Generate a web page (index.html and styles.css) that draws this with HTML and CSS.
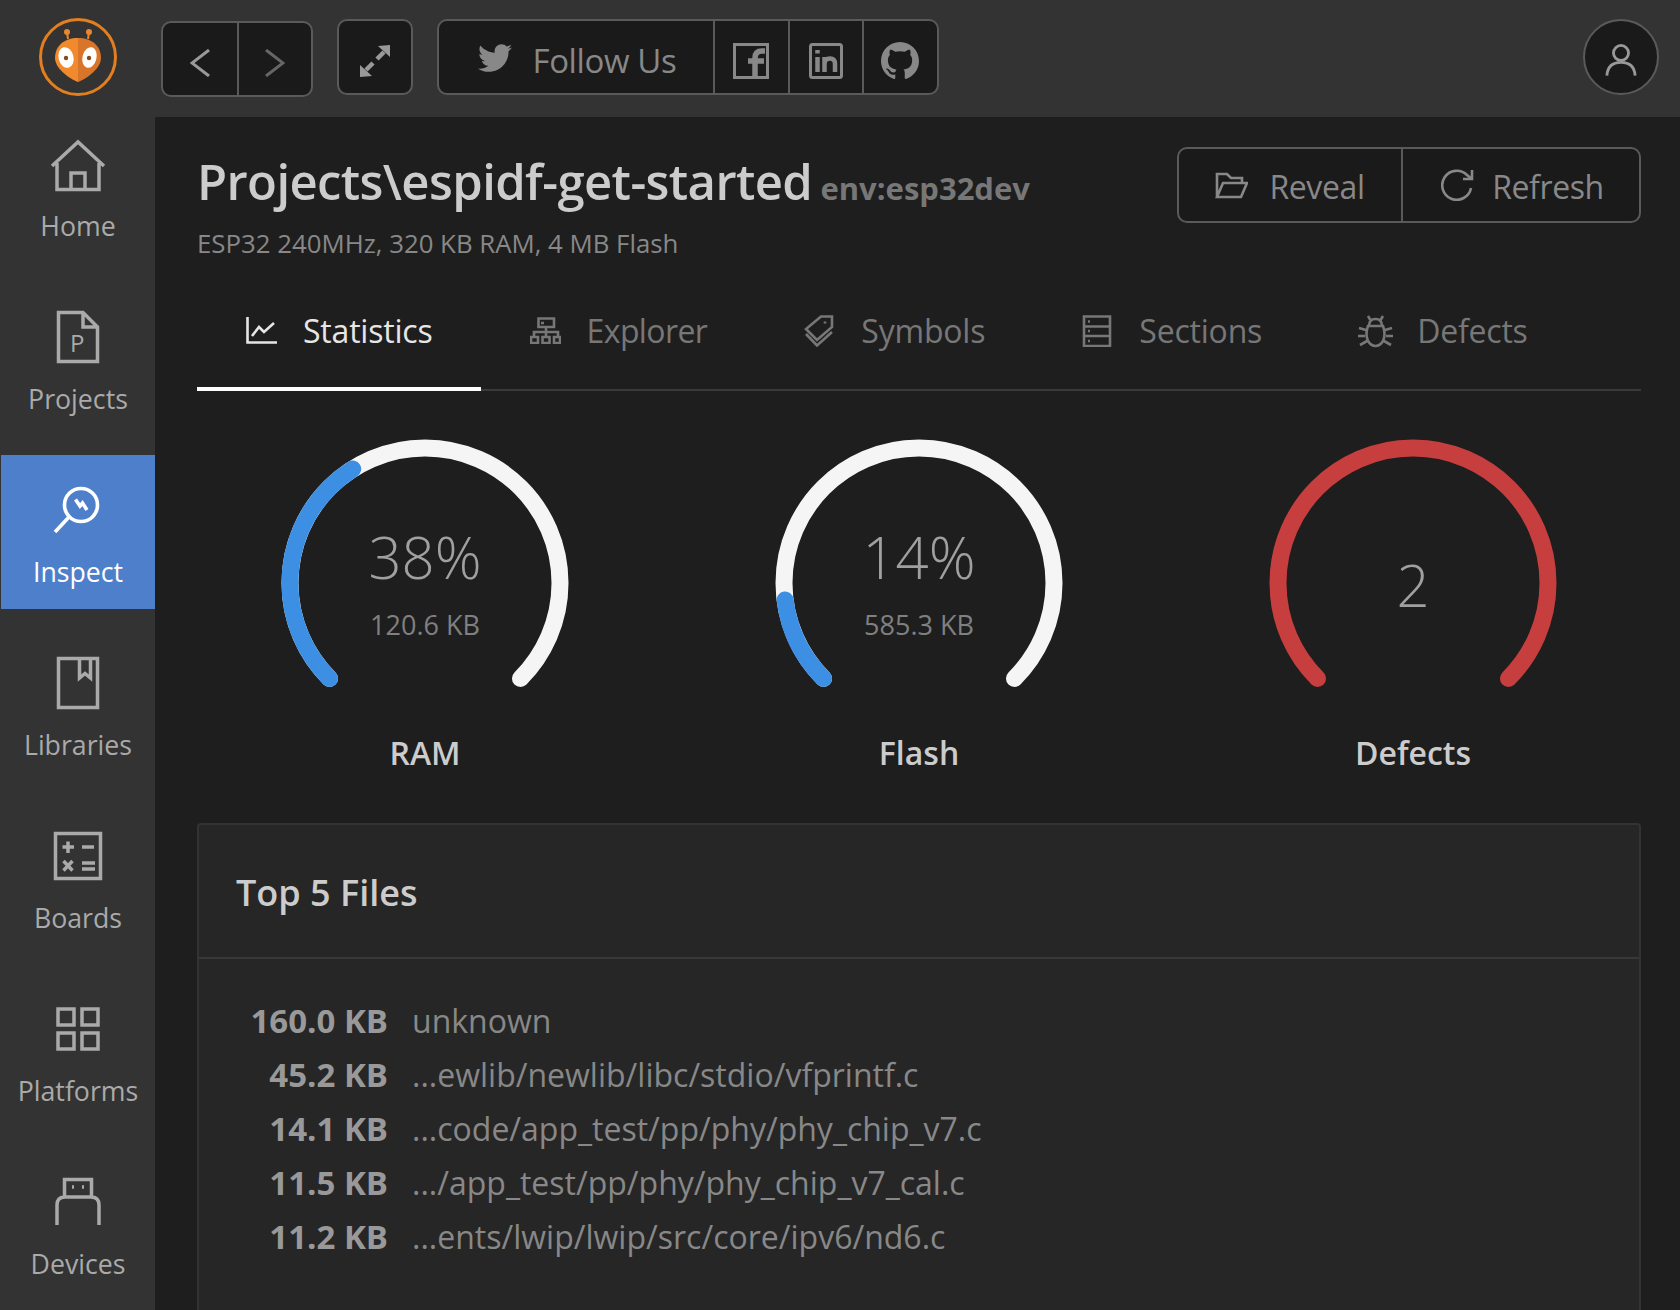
FILE: index.html
```html
<!DOCTYPE html>
<html lang="en">
<head>
<meta charset="utf-8">
<title>PlatformIO Inspect</title>
<link rel="stylesheet" href="styles.css">
</head>
<body>
<div class="app">
  <aside class="sidebar">
    <div class="logo-wrap">
      <svg class="logo" width="78" height="78" viewBox="0 0 78 78">
        <circle cx="39" cy="39" r="37.5" fill="none" stroke="#e37f1f" stroke-width="3"/>
        <path d="M29 21 L28 14 M49 21 L50 14" stroke="#e8872c" stroke-width="2" fill="none"/>
        <circle cx="28" cy="14" r="3" fill="#e8872c"/><circle cx="50" cy="14" r="3" fill="#e8872c"/>
        <path d="M39 20 C25 20 16 28 16 40 C16 50 29 60 39 64 Z" fill="#f08a2c"/>
        <path d="M39 20 C53 20 62 28 62 40 C62 50 49 60 39 64 Z" fill="#d8752a"/>
        <ellipse cx="27" cy="39.5" rx="7.5" ry="10.5" fill="#fff" transform="rotate(-14 27 39.5)"/>
        <ellipse cx="50.5" cy="39.5" rx="7" ry="10.5" fill="#fff" transform="rotate(14 50.5 39.5)"/>
        <circle cx="27" cy="40" r="2.2" fill="#8a4a18"/><circle cx="50" cy="40" r="2.2" fill="#8a4a18"/>
      </svg>
    </div>
    <nav class="nav">
      <a class="nav-item">
        <svg class="nav-icon" width="56" height="56" viewBox="0 0 56 56"><path d="M2 30 L28 6 L54 30 M7 27 V53.5 H49 V27 M21 53.5 V37 H35 V53.5"/></svg>
        <span class="nav-label">Home</span>
      </a>
      <a class="nav-item">
        <svg class="nav-icon" width="56" height="56" viewBox="0 0 56 56"><path d="M8.5 3.5 H33 L47.5 18 V52.5 H8.5 Z M33 3.5 V18 H47.5"/><text class="icon-letter" x="20" y="43">P</text></svg>
        <span class="nav-label">Projects</span>
      </a>
      <a class="nav-item active">
        <svg class="nav-icon" width="56" height="56" viewBox="0 0 56 56"><circle cx="31" cy="23" r="16.5"/><path d="M19 35 L5 50 M25.5 17.5 L30 24 L32.5 21 L37 28"/></svg>
        <span class="nav-label">Inspect</span>
      </a>
      <a class="nav-item">
        <svg class="nav-icon" width="56" height="56" viewBox="0 0 56 56"><path d="M8.5 3.5 H47.5 V52.5 H8.5 Z M29.5 3.5 V23 L35 18.5 L40.5 23 V3.5"/></svg>
        <span class="nav-label">Libraries</span>
      </a>
      <a class="nav-item">
        <svg class="nav-icon" width="56" height="56" viewBox="0 0 56 56"><path d="M5.5 5.5 H50.5 V50.5 H5.5 Z M12.5 19 H24 M18 13.5 V25 M32 19 H44 M13.5 33 L22.5 42.5 M22.5 33 L13.5 42.5 M32 35 H45 M32 41 H45"/></svg>
        <span class="nav-label">Boards</span>
      </a>
      <a class="nav-item">
        <svg class="nav-icon" width="56" height="56" viewBox="0 0 56 56"><path d="M8 8 H24 V24 H8 Z M32 8 H48 V24 H32 Z M8 32 H24 V48 H8 Z M32 32 H48 V48 H32 Z"/></svg>
        <span class="nav-label">Platforms</span>
      </a>
      <a class="nav-item">
        <svg class="nav-icon" width="56" height="56" viewBox="0 0 56 56"><path d="M14.5 23 V5.5 H41.5 V23 M7 51 V31 Q7 23 15 23 H41 Q49 23 49 31 V51 M22 13 H24 M32 13 H34"/></svg>
        <span class="nav-label">Devices</span>
      </a>
    </nav>
  </aside>
  <div class="content">
    <header class="topbar">
      <div class="btn-group offset">
        <span class="btn square">
          <svg class="ico chevron" width="20" height="28" viewBox="0 0 20 28"><path d="M19 1 L2 14 L19 27"/></svg>
        </span>
        <span class="btn square dim">
          <svg class="ico chevron" width="20" height="28" viewBox="0 0 20 28"><path d="M1 1 L18 14 L1 27"/></svg>
        </span>
      </div>
      <div class="btn-group expand">
        <span class="btn single">
          <svg class="ico-fill" width="30" height="32" viewBox="0 0 30 32"><path d="M30 0 V12 L18 1 Z M0 32 V20 L12 31 Z"/><path class="expand-shaft" d="M17 14 L24 7 M13 18 L6 25"/></svg>
        </span>
      </div>
      <div class="btn-group">
        <span class="btn follow">
          <svg class="ico-fill" width="34" height="30" viewBox="0 30 512 450"><path d="M459.37 151.716c.325 4.548.325 9.097.325 13.645 0 138.72-105.583 298.558-298.558 298.558-59.452 0-114.68-17.219-161.137-47.106 8.447.974 16.568 1.299 25.34 1.299 49.055 0 94.213-16.568 130.274-44.832-46.132-.975-84.792-31.188-98.112-72.772 6.498.974 12.995 1.624 19.818 1.624 9.421 0 18.843-1.3 27.614-3.573-48.081-9.747-84.143-51.98-84.143-102.985v-1.299c13.969 7.797 30.214 12.67 47.431 13.319-28.264-18.843-46.781-51.005-46.781-87.391 0-19.492 5.197-37.36 14.294-52.954 51.655 63.675 129.3 105.258 216.365 109.807-1.624-7.797-2.599-15.918-2.599-24.04 0-57.828 46.782-104.934 104.934-104.934 30.213 0 57.502 12.67 76.67 33.137 23.715-4.548 46.456-13.32 66.599-25.34-7.798 24.366-24.366 44.833-46.132 57.827 21.117-2.273 41.584-8.122 60.426-16.243-14.292 20.791-32.161 39.308-52.628 54.253z"/></svg>
          <span class="btn-text">Follow Us</span>
        </span>
        <span class="btn social">
          <svg class="ico" width="36" height="36" viewBox="0 0 36 36"><path d="M1.5 1.5 H34.5 V34.5 H1.5 Z" stroke-width="3"/><path d="M22 34 V15 Q22 8 29 8 H32 M15 18 H31" stroke-width="5.5"/></svg>
        </span>
        <span class="btn social">
          <svg class="ico" width="34" height="36" viewBox="0 0 34 36"><rect x="1.5" y="1.5" width="31" height="33" rx="2" stroke-width="3"/><path d="M8.5 14 V29 M8.5 7 V10.5 M15.5 14 V29 M15.5 21 Q15.5 15.5 21 15.5 Q26 15.5 26 21 V29" stroke-width="4.5"/></svg>
        </span>
        <span class="btn social">
          <svg class="ico-fill" width="38" height="40" viewBox="0 0 16 16"><path d="M8 0C3.58 0 0 3.58 0 8c0 3.54 2.29 6.53 5.47 7.59.4.07.55-.17.55-.38 0-.19-.01-.82-.01-1.49-2.01.37-2.53-.49-2.69-.94-.09-.23-.48-.94-.82-1.13-.28-.15-.68-.52-.01-.53.63-.01 1.08.58 1.23.82.72 1.21 1.87.87 2.33.66.07-.52.28-.87.51-1.07-1.78-.2-3.64-.89-3.64-3.95 0-.87.31-1.59.82-2.15-.08-.2-.36-1.02.08-2.12 0 0 .67-.21 2.2.82.64-.18 1.32-.27 2-.27.68 0 1.36.09 2 .27 1.53-1.04 2.2-.82 2.2-.82.44 1.1.16 1.92.08 2.12.51.56.82 1.27.82 2.15 0 3.07-1.87 3.75-3.65 3.95.29.25.54.73.54 1.48 0 1.07-.01 1.93-.01 2.2 0 .21.15.46.55.38A8.013 8.013 0 0016 8c0-4.42-3.58-8-8-8z"/></svg>
        </span>
      </div>
      <span class="avatar">
        <svg class="ico" width="32" height="35" viewBox="0 0 34 36"><circle cx="17" cy="10" r="8"/><path d="M2 34 Q3 20 17 20 Q31 20 32 34"/></svg>
      </span>
    </header>
    <main class="main">
      <section class="page-head">
        <div>
          <h1 class="title">Projects\espidf-get-started <small class="env">env:esp32dev</small></h1>
          <p class="subtitle">ESP32 240MHz, 320 KB RAM, 4 MB Flash</p>
        </div>
        <div class="btn-group actions">
          <span class="btn action reveal">
            <svg class="ico thin" width="33" height="27" viewBox="0 0 33 27"><path d="M2 25 V2 H12 L16 6 H27 V11 M2 25 L8 11 H32 L26 25 Z"/></svg>
            <span class="btn-text">Reveal</span>
          </span>
          <span class="btn action">
            <svg class="ico thin refresh" width="33" height="32" viewBox="0 0 33 32"><path d="M30 19 A14.5 14.5 0 1 1 26 6 L31 10"/><path d="M31 1 V10 H22" /></svg>
            <span class="btn-text">Refresh</span>
          </span>
        </div>
      </section>
      <nav class="tabs">
        <a class="tab active">
          <svg class="tab-icon" width="31" height="27" viewBox="0 0 31 27"><path d="M1.5 0 V25.5 H31 M6 19 L13 10 L18 15 L28 6"/></svg>
          <span>Statistics</span>
        </a>
        <a class="tab tab-tight">
          <svg class="tab-icon" width="31" height="27" viewBox="0 0 31 27"><path d="M8.5 1.5 H24 V10 H8.5 Z M11 6 H14 M16 10 V15 M4 20 V15 H28 V20 M16 15 V20 M1 20 H8 V26 H1 Z M12.5 20 H19.5 V26 H12.5 Z M24 20 H30 V26 H24 Z"/></svg>
          <span>Explorer</span>
        </a>
        <a class="tab">
          <svg class="tab-icon" width="31" height="32" viewBox="0 0 31 32"><path d="M17 1.5 H28 V12 L13 25 L2 14 Z M2 19 L13 30.5 L28 17 M21 6.5 V8.5"/></svg>
          <span>Symbols</span>
        </a>
        <a class="tab">
          <svg class="tab-icon" width="31" height="32" viewBox="0 0 31 32"><path d="M2 1.5 H28 V31 H2 Z M2 11.5 H28 M2 21 H28 M6 6.5 H8 M6 16 H8 M6 26 H8"/></svg>
          <span>Sections</span>
        </a>
        <a class="tab tab-last">
          <svg class="tab-icon" width="35" height="34" viewBox="0 0 35 34"><path d="M10 12 H25 Q28 20 25 27 Q22 32 17.5 32 Q13 32 10 27 Q7 20 10 12 Z M11 12 Q11 5 17.5 5 Q24 5 24 12 M10 2 L13 7 M25 2 L22 7 M1 14 L8 16 M34 14 L27 16 M0 22 H7 M35 22 H28 M2 31 L9 27 M33 31 L26 27"/></svg>
          <span>Defects</span>
        </a>
      </nav>
      <section class="gauges">
        <figure class="gauge">
          <div class="dial">
            <svg class="arc" width="300" height="260" viewBox="0 0 300 260">
              <path class="track" d="M54.54 245.46 A135 135 0 1 1 245.46 245.46"/>
              <path class="used" d="M54.54 245.46 A135 135 0 0 1 77.67 35.97"/>
            </svg>
            <div class="readout">
              <div class="value">38%</div>
              <div class="amount">120.6 KB</div>
            </div>
          </div>
          <figcaption class="caption">RAM</figcaption>
        </figure>
        <figure class="gauge">
          <div class="dial">
            <svg class="arc" width="300" height="260" viewBox="0 0 300 260">
              <path class="track" d="M54.54 245.46 A135 135 0 1 1 245.46 245.46"/>
              <path class="used" d="M54.54 245.46 A135 135 0 0 1 16.07 166.9"/>
            </svg>
            <div class="readout">
              <div class="value">14%</div>
              <div class="amount">585.3 KB</div>
            </div>
          </div>
          <figcaption class="caption">Flash</figcaption>
        </figure>
        <figure class="gauge">
          <div class="dial">
            <svg class="arc" width="300" height="260" viewBox="0 0 300 260">
              <path class="track danger" d="M54.54 245.46 A135 135 0 1 1 245.46 245.46"/>
            </svg>
            <div class="readout single-value">
              <div class="value">2</div>
            </div>
          </div>
          <figcaption class="caption">Defects</figcaption>
        </figure>
      </section>
      <section class="card">
        <h2 class="card-title">Top 5 Files</h2>
        <div class="file-list">
          <div class="file-size">160.0 KB</div><div class="file-name">unknown</div>
          <div class="file-size">45.2 KB</div><div class="file-name">...ewlib/newlib/libc/stdio/vfprintf.c</div>
          <div class="file-size">14.1 KB</div><div class="file-name">...code/app_test/pp/phy/phy_chip_v7.c</div>
          <div class="file-size">11.5 KB</div><div class="file-name">.../app_test/pp/phy/phy_chip_v7_cal.c</div>
          <div class="file-size">11.2 KB</div><div class="file-name">...ents/lwip/lwip/src/core/ipv6/nd6.c</div>
        </div>
      </section>
    </main>
  </div>
</div>
</body>
</html>
```

FILE: styles.css
```css
* { box-sizing: border-box; }
html, body { margin: 0; height: 100%; background: #1e1e1e; }
body { font-family: "Open Sans", "Noto Sans", sans-serif; color: #999; overflow: hidden; }

.app { display: flex; height: 1310px; overflow: hidden; }

.sidebar { width: 155px; flex: none; background: #333; }
.logo-wrap { height: 109px; padding: 18px 0 0 39px; }
.logo { display: block; }
.nav { display: flex; flex-direction: column; gap: 19px; padding-left: 1px; }
.nav-item {
  display: flex; flex-direction: column; align-items: center;
  height: 154px; padding-top: 27px; color: #aaa;
}
.nav-item.active { background: #4e7fcb; color: #fff; }
.nav-icon { display: block; fill: none; stroke: currentColor; stroke-width: 3.5; }
.nav-item.active .nav-icon { stroke-width: 3.6; }
.icon-letter { font-size: 24px; fill: currentColor; stroke: none; font-family: "Open Sans", sans-serif; }
.nav-label { margin-top: 16px; font-size: 26.7px; line-height: 36px; }

.content { flex: 1; min-width: 0; display: flex; flex-direction: column; }

.topbar {
  height: 117px; flex: none; background: #333; display: flex; align-items: center;
  gap: 25px; padding: 0 21px 3px 6px;
}
.btn-group {
  display: flex; height: 76px; background: #1a1a1a; border: 2px solid #5a5a5a;
  border-radius: 10px; overflow: hidden; flex: none;
}
.btn-group.offset { margin-top: 4px; margin-right: -1px; }
.btn-group.expand { margin-right: -1px; }
.btn {
  display: flex; align-items: center; justify-content: center; color: #999;
  font-size: 33px; letter-spacing: -.4px; border-left: 2px solid #5a5a5a;
}
.btn:first-child { border-left: 0; }
.btn-text { padding-top: 6px; }
.btn.square { width: 74px; }
.btn.dim { color: #666; }
.chevron { margin-top: 8px; stroke-width: 2.6; }
.btn.single { width: 72px; padding-top: 8px; }
.btn.follow { width: 274px; gap: 21px; color: #888; padding-left: 38.5px; justify-content: flex-start; }
.btn.follow .ico-fill { margin-top: 2px; }
.btn.social { width: 74.5px; color: #888; padding-top: 8px; }
.expand-shaft { fill: none; stroke: currentColor; stroke-width: 4.5; }
.avatar {
  margin-left: auto; width: 76px; height: 76px; border-radius: 50%; background: #1a1a1a; padding-top: 6px;
  border: 2px solid #5a5a5a; display: flex; align-items: center; justify-content: center; color: #999; flex: none;
}
.ico { display: block; fill: none; stroke: currentColor; stroke-width: 3; }
.ico.thin { stroke-width: 2.6; }
.ico.refresh { margin: 0 -3px 0 3px; }
.ico-fill { display: block; fill: currentColor; }

.main { flex: 1; min-height: 0; padding: 30px 39px 0 42px; overflow: hidden; }

.page-head { display: flex; justify-content: space-between; align-items: flex-start; }
.title { margin: 0; font-size: 49px; line-height: 68px; font-weight: 600; color: #ccc; letter-spacing: -.6px; white-space: nowrap; }
.env { margin-left: -4px; font-size: 31px; font-weight: 700; color: #777; letter-spacing: 0; }
.subtitle { margin: 1px 0 0; font-size: 25.8px; line-height: 40px; color: #888; }
.btn.action { gap: 21px; width: 238px; color: #888; font-size: 32px; }
.btn.action .btn-text { padding-top: 2px; }
.btn.action.reveal { width: 222px; }

.tabs { display: flex; margin-top: 26px; height: 102px; border-bottom: 2px solid #3a3a3a; }
.tab {
  display: flex; align-items: center; gap: 26px; height: 102px; padding: 0 48px 19px 49px;
  color: #777; font-size: 32px; line-height: 44px; letter-spacing: -.2px;
}
.tab.tab-tight { letter-spacing: -.6px; }
.tab.tab-last { gap: 24px; margin-left: -1px; }
.tab.active { color: #e6e6e6; border-bottom: 4px solid #fff; height: 102px; padding-bottom: 15px; }
.tab-icon { display: block; fill: none; stroke: currentColor; stroke-width: 2.6; flex: none; }

.gauges { display: grid; grid-template-columns: repeat(3, 1fr); margin: 41.5px -19px 0; }
.gauge { margin: 0; display: flex; flex-direction: column; align-items: center; }
.dial { display: grid; }
.arc { grid-area: 1 / 1; display: block; }
.track { fill: none; stroke: #f5f5f5; stroke-width: 17; stroke-linecap: round; }
.track.danger { stroke: #c73e3e; }
.used { fill: none; stroke: #3d8fe3; stroke-width: 17; stroke-linecap: round; }
.readout { grid-area: 1 / 1; text-align: center; padding-top: 94px; }
.readout.single-value { padding-top: 122px; }
.value { font-size: 58px; line-height: 60px; font-weight: 300; color: #a0a0a0; }
.amount { margin-top: 20px; font-size: 27px; line-height: 36px; color: #808080; }
.caption { margin-top: 40px; font-size: 32px; line-height: 40px; font-weight: 600; color: #ccc; }

.card {
  margin-top: 50px; height: 600px; background: #262626;
  border: 2px solid #333; border-radius: 4px;
}
.card-title {
  margin: 0; padding: 46px 0 42px 37px; font-size: 36px; line-height: 44px; font-weight: 600; color: #ccc;
  border-bottom: 2px solid #383838;
}
.file-list {
  display: grid; grid-template-columns: 151px 1fr; column-gap: 24px;
  padding: 35.5px 0 0 38px; font-size: 32px; line-height: 54px; color: #888;
}
.file-size { font-weight: 700; text-align: right; color: #999; white-space: nowrap; font-size: 33px; }
.file-name { white-space: nowrap; }
```
